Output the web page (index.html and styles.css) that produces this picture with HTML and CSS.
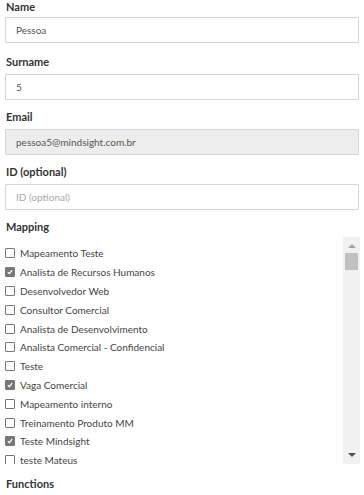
FILE: index.html
```html
<!DOCTYPE html>
<html lang="pt-BR">

<head>
    <meta charset="UTF-8">
    <meta name="viewport" content="width=device-width, initial-scale=1.0">
    <title>Pessoa</title>
    <link rel="stylesheet" href="styles.css">
</head>

<body>
    <form class="person-form">
        <div class="form-group">
            <label class="field-label" for="name">Name</label>
            <input type="text" class="form-control" id="name" value="Pessoa">
        </div>
        <div class="form-group">
            <label class="field-label" for="surname">Surname</label>
            <input type="text" class="form-control" id="surname" value="5">
        </div>
        <div class="form-group">
            <label class="field-label" for="email">Email</label>
            <input type="email" class="form-control" id="email" value="pessoa5@mindsight.com.br" readonly>
        </div>
        <div class="form-group">
            <label class="field-label" for="extid">ID (optional)</label>
            <input type="text" class="form-control" id="extid" placeholder="ID (optional)">
        </div>
        <div class="form-group list-group">
            <span class="field-label">Mapping</span>
            <div class="list-wrap">
                <div class="check-list">
                    <label class="check-item"><span class="box"></span>Mapeamento Teste</label>
                    <label class="check-item"><span class="box checked"><svg viewBox="0 0 10 10"><path d="M2.3 5.3 4.2 7.1 7.7 2.7"/></svg></span>Analista de Recursos Humanos</label>
                    <label class="check-item"><span class="box"></span>Desenvolvedor Web</label>
                    <label class="check-item"><span class="box"></span>Consultor Comercial</label>
                    <label class="check-item"><span class="box"></span>Analista de Desenvolvimento</label>
                    <label class="check-item"><span class="box"></span>Analista Comercial - Confidencial</label>
                    <label class="check-item"><span class="box"></span>Teste</label>
                    <label class="check-item"><span class="box checked"><svg viewBox="0 0 10 10"><path d="M2.3 5.3 4.2 7.1 7.7 2.7"/></svg></span>Vaga Comercial</label>
                    <label class="check-item"><span class="box"></span>Mapeamento interno</label>
                    <label class="check-item"><span class="box"></span>Treinamento Produto MM</label>
                    <label class="check-item"><span class="box checked"><svg viewBox="0 0 10 10"><path d="M2.3 5.3 4.2 7.1 7.7 2.7"/></svg></span>Teste Mindsight</label>
                    <label class="check-item"><span class="box"></span>teste Mateus</label>
                </div>
                <!-- fake classic scrollbar drawn over the list -->
                <div class="scrollbar">
                    <span class="arrow up"></span>
                    <span class="thumb"></span>
                    <span class="arrow down"></span>
                </div>
            </div>
        </div>
        <div class="form-group">
            <span class="field-label">Functions</span>
        </div>
    </form>
</body>

</html>
```

FILE: styles.css
```css
html,
body {
    margin: 0;
    background: #fff;
}

body {
    font-family: Lato, "Open Sans", sans-serif;
    font-size: 10px;
    color: #444;
}

.person-form {
    padding: 0 5px;
}

.form-group {
    margin-bottom: 10px;
}

.form-group:first-child {
    margin-bottom: 12px;
}

.form-group:first-child .field-label {
    margin-bottom: 3px;
}

.list-group {
    margin-bottom: 13px;
}

.field-label {
    display: block;
    font-weight: bold;
    color: #333;
    font-size: 11px;
    line-height: 14px;
    margin: 0 0 5px 1px;
}

.form-control {
    display: block;
    box-sizing: border-box;
    width: 354px;
    height: 26px;
    padding: 0 10px;
    border: 1px solid #d4d4de;
    border-radius: 1px;
    font-family: inherit;
    font-size: 10px;
    color: #555;
    background: #fff;
    outline: none;
}

.form-control[readonly] {
    background: #ededed;
}

.form-control::placeholder {
    color: #aaa;
}

.list-wrap {
    position: relative;
    width: 355px;
    margin-top: -2px;
}

.check-list {
    height: 227px;
    overflow: hidden;
    padding-top: 7px;
    box-sizing: border-box;
}

.check-item {
    display: flex;
    align-items: center;
    height: 18.8px;
    line-height: 12px;
    color: #444;
}

.box {
    box-sizing: border-box;
    width: 10px;
    height: 10px;
    margin: 0 5px 0 0;
    border: 1px solid #777;
    border-radius: 1px;
    flex-shrink: 0;
}

.box.checked {
    background: #777;
}

.box svg {
    display: block;
    width: 8px;
    height: 8px;
    fill: none;
    stroke: #fff;
    stroke-width: 1.6;
}

.scrollbar {
    position: absolute;
    top: 0;
    right: 0;
    bottom: 0;
    width: 17px;
    background: #f1f1f1;
    display: flex;
    flex-direction: column;
    align-items: center;
}

.arrow {
    width: 0;
    height: 0;
    border-left: 4px solid transparent;
    border-right: 4px solid transparent;
}

.arrow.up {
    margin-top: 7px;
    border-bottom: 4px solid #a3a3a3;
}

.arrow.down {
    margin-top: auto;
    margin-bottom: 7px;
    border-top: 4px solid #505050;
}

.thumb {
    width: 13px;
    height: 17px;
    margin-top: 5px;
    background: #c1c1c1;
}
```
